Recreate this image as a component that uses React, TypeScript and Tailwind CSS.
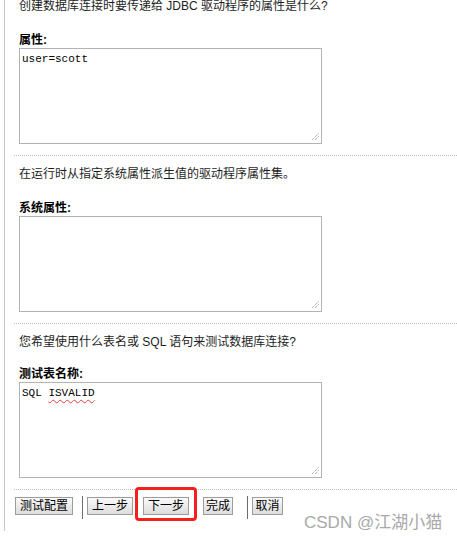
import React from "react";

const cjk = { fontFamily: '"Liberation Sans", "Noto Sans CJK SC", sans-serif' };
const mono = { fontFamily: '"Liberation Mono", "Noto Sans CJK SC", monospace' };

const Grip = () => (
  <svg className="absolute right-[2px] bottom-[2px]" width="9" height="9" viewBox="0 0 9 9">
    <line x1="8.5" y1="1.5" x2="1.5" y2="8.5" stroke="#8a8a8a" strokeWidth="1" strokeDasharray="1 1" />
    <line x1="8.5" y1="4.5" x2="4.5" y2="8.5" stroke="#8a8a8a" strokeWidth="1" strokeDasharray="1 1" />
  </svg>
);

const Field = ({ children }: { children?: React.ReactNode }) => (
  <div
    className="relative w-[303px] h-[96px] border border-[#b3b3b3] bg-white px-[2px] pt-[3px] text-[11px] leading-[14px] text-black"
    style={mono}
  >
    {children}
    <Grip />
  </div>
);

const Section = ({
  question,
  label,
  tight,
  children,
}: {
  question: string;
  label: string;
  tight?: boolean;
  children?: React.ReactNode;
}) => (
  <div className="border-b border-dotted border-[#bdbdbd] pl-[5px] pt-[10px] pb-[11px]">
    <p className="text-[12px] leading-[16px] text-[#1e1e1e]">{question}</p>
    <p className={`${tight ? "mt-[16px]" : "mt-[18px]"} text-[12px] leading-[16px] font-bold text-black`}>{label}</p>
    <Field>{children}</Field>
  </div>
);

const Btn = ({ label, w }: { label: string; w: string }) => (
  <button
    className={`block h-[18px] ${w} border border-[#9c9c9c] bg-gradient-to-b from-[#fbfbfb] to-[#dcdcdc] text-[12px] leading-[16px] text-black text-center`}
  >
    {label}
  </button>
);

export default function App() {
  return (
    <div className="relative h-[543px] w-[457px] overflow-hidden bg-white" style={cjk}>
      <div className="ml-[4px] h-full border-l border-[#c9c9c9]">
        <div className="ml-[9px] mt-[-12px]">
          <Section question="创建数据库连接时要传递给 JDBC 驱动程序的属性是什么?" label="属性:">
            user=scott
          </Section>
          <Section question="在运行时从指定系统属性派生值的驱动程序属性集。" label="系统属性:" />
          <Section question="您希望使用什么表名或 SQL 语句来测试数据库连接?" label="测试表名称:" tight>
            SQL{" "}
            <span className="underline decoration-wavy decoration-[#e04040] decoration-1 underline-offset-[3px]">
              ISVALID
            </span>
          </Section>

          {/* buttons */}
          <div className="flex items-start pl-[1px] pt-[7px]">
            <Btn label="测试配置" w="w-[58px]" />
            <span className="ml-[9px] -mt-px h-[23px] w-px bg-[#6b6b6b]" />
            <div className="ml-[4px] flex">
              <Btn label="上一步" w="w-[46px]" />
            </div>
            <div className="relative ml-[10px] flex">
              <Btn label="下一步" w="w-[46px]" />
              <span className="pointer-events-none absolute -left-[8px] -right-[8px] -top-[10px] -bottom-[6px] rounded-[4px] border-[3px] border-[#f2201e]" />
            </div>
            <div className="ml-[14px] flex">
              <Btn label="完成" w="w-[30px]" />
            </div>
            <span className="ml-[14px] -mt-px h-[23px] w-px bg-[#6b6b6b]" />
            <div className="ml-[4px] flex">
              <Btn label="取消" w="w-[31px]" />
            </div>
          </div>
        </div>
      </div>

      {/* watermark */}
      <span className="absolute left-[304px] top-[512px] text-[17px] leading-[22px] text-[#a9a9a9]">
        CSDN @江湖小猫
      </span>
    </div>
  );
}
